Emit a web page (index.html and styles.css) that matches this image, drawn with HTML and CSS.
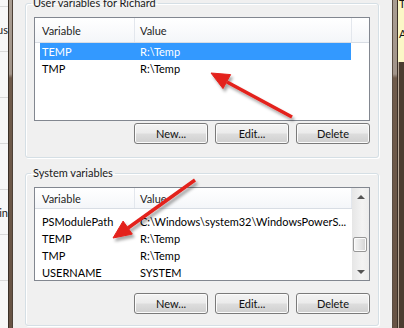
FILE: index.html
```html
<!DOCTYPE html>
<html lang="en">
<head>
    <meta charset="UTF-8" />
    <title>Environment Variables</title>
    <link rel="stylesheet" href="styles.css">
</head>

<body>
    <div class="desk">

        <div class="behind">
            <div class="behind-row"></div>
            <div class="behind-row tall"><span>Status</span></div>
            <div class="behind-row"></div>
            <div class="behind-row"></div>
            <div class="behind-row"></div>
            <div class="behind-row tall"><span>Admin</span></div>
            <div class="behind-row"></div>
        </div>

        <div class="frame"></div>

        <main class="dialog">

            <fieldset class="group group-user">
                <legend>User variables for Richard</legend>
                <div class="list list-user">
                    <div class="list-main">
                        <div class="list-head">
                            <div class="col col-name">Variable</div>
                            <div class="col col-value">Value</div>
                            <div class="col col-rest"></div>
                        </div>
                        <div class="list-body">
                            <div class="row selected">
                                <span class="cell cell-name">TEMP</span>
                                <span class="cell cell-value">R:\Temp</span>
                            </div>
                            <div class="row">
                                <span class="cell cell-name">TMP</span>
                                <span class="cell cell-value">R:\Temp</span>
                            </div>
                        </div>
                    </div>
                </div>
                <div class="buttons">
                    <button class="btn">New...</button>
                    <button class="btn">Edit...</button>
                    <button class="btn">Delete</button>
                </div>
            </fieldset>

            <fieldset class="group group-system">
                <legend>System variables</legend>
                <div class="list list-system">
                    <div class="list-main">
                        <div class="list-head">
                            <div class="col col-name">Variable</div>
                            <div class="col col-value">Value</div>
                        </div>
                        <div class="list-body">
                            <div class="row">
                                <span class="cell cell-name">PSModulePath</span>
                                <span class="cell cell-value">C:\Windows\system32\WindowsPowerS...</span>
                            </div>
                            <div class="row">
                                <span class="cell cell-name">TEMP</span>
                                <span class="cell cell-value">R:\Temp</span>
                            </div>
                            <div class="row">
                                <span class="cell cell-name">TMP</span>
                                <span class="cell cell-value">R:\Temp</span>
                            </div>
                            <div class="row">
                                <span class="cell cell-name">USERNAME</span>
                                <span class="cell cell-value">SYSTEM</span>
                            </div>
                        </div>
                    </div>
                    <div class="scrollbar">
                        <div class="scroll-btn"><span class="tri tri-up"></span></div>
                        <div class="scroll-track"><div class="scroll-thumb"></div></div>
                        <div class="scroll-btn"><span class="tri tri-down"></span></div>
                    </div>
                </div>
                <div class="buttons">
                    <button class="btn">New...</button>
                    <button class="btn">Edit...</button>
                    <button class="btn">Delete</button>
                </div>
            </fieldset>

        </main>

        <div class="frame frame-right"></div>

        <div class="note">
            <div class="note-paper"><span>T</span><span>A</span></div>
        </div>
    </div>

    <!-- the two red callout arrows drawn over the dialog -->
    <svg class="arrows" width="404" height="328" viewBox="0 0 404 328">
        <defs>
            <filter id="shade" x="-20%" y="-20%" width="140%" height="140%">
                <feDropShadow dx="2" dy="3" stdDeviation="1.6" flood-color="#000" flood-opacity="0.35" />
            </filter>
        </defs>
        <g filter="url(#shade)" fill="#e3211b" stroke="#e3211b">
            <line x1="292" y1="117" x2="227" y2="82" stroke-width="3.5" />
            <polygon points="211,73 230.6,74.6 223,88.6" stroke-width="1" />
            <line x1="195" y1="180" x2="128" y2="228" stroke-width="3.5" />
            <polygon points="113,238 123.1,221.1 132.3,234.1" stroke-width="1" />
        </g>
    </svg>
</body>

</html>
```

FILE: styles.css
```css
* {
    box-sizing: border-box;
}

html,
body {
    margin: 0;
    width: 404px;
    height: 328px;
    overflow: hidden;
    font-family: Lato, 'Open Sans', sans-serif;
    font-size: 11px;
    color: #000;
}

body {
    position: relative;
}

.desk {
    display: flex;
    height: 328px;
}

/* window behind, left edge */
.behind {
    width: 8px;
    flex: none;
    background: #f7f7f7;
    overflow: hidden;
}

.behind-row {
    height: 46px;
    border-bottom: 1px solid #d9d9d9;
    display: flex;
    align-items: center;
    justify-content: flex-end;
    white-space: nowrap;
    color: #222;
}

.behind-row:first-child {
    height: 7px;
}

.behind-row.tall {
    height: 45px;
}

.frame {
    width: 5px;
    flex: none;
    border-left: 1px solid #3b3027;
    border-right: 1px solid #4d4137;
    background: linear-gradient(#a99d92 0, #a2958a 74px, #6f5b4b 78px, #675344 100%);
}

.frame-right {
    width: 6px;
    border-left-color: #5a4d42;
    border-right-color: #3b3027;
}

.note {
    width: 6px;
    flex: none;
    background: linear-gradient(90deg, #b9a998 0, #b9a998 1px, #4b3c30 1px);
}

.note-paper {
    height: 62px;
    background: #fbf7c6;
    display: flex;
    flex-direction: column;
    padding-left: 1px;
    font-size: 11px;
    line-height: 8px;
    gap: 22px;
    overflow: hidden;
    color: #111;
}

/* dialog */
.dialog {
    width: 379px;
    flex: none;
    padding: 0 13px 0 12px;
    background: #f0f0f0;
}

.group {
    margin: 0;
    padding: 7px 8px 13px;
    min-width: 0;
    border: 1px solid #d5dfe5;
    border-radius: 3px;
    box-shadow: 1px 1px 0 #fff, inset 1px 1px 0 #fff;
}

.group legend {
    padding: 0 2px;
    margin-left: -3px;
    line-height: 14px;
    color: #1a1a1a;
}

.group-user {
    margin-top: -4px;
}

.group-system {
    margin-top: 8px;
    padding-bottom: 11px;
}

.list {
    display: flex;
    border: 1px solid #828790;
    background: #fff;
    overflow: hidden;
}

.list-user {
    height: 104px;
}

.list-system {
    height: 94px;
}

.list-main {
    flex: 1;
    min-width: 0;
}

.list-head {
    display: flex;
    height: 25px;
    border-bottom: 1px solid #d8dde4;
    background: linear-gradient(#ffffff, #f4f6f9);
}

.list-system .list-head {
    height: 21px;
}

.col {
    height: 100%;
    display: flex;
    align-items: center;
    border-right: 1px solid #e3e7ed;
    color: #1e1e1e;
}

.col-name {
    width: 100px;
    padding-left: 7px;
}

.col-value {
    width: 217px;
    padding-left: 5px;
}

.col-rest {
    flex: 1;
    border-right: none;
}

.list-system .list-body {
    padding-top: 4px;
}

.row {
    display: flex;
    width: 311px;
    height: 17px;
    margin-left: 5px;
    align-items: center;
    white-space: nowrap;
}

.row.selected {
    background: #3399ff;
    color: #fff;
}

.cell-name {
    width: 95px;
    flex: none;
    padding-left: 2px;
}

.cell-value {
    padding-left: 5px;
}

/* vertical scrollbar of the system list */
.scrollbar {
    width: 17px;
    flex: none;
    display: flex;
    flex-direction: column;
    background: linear-gradient(90deg, #e6e6e6, #f3f3f3 60%, #ececec);
}

.scroll-btn {
    height: 17px;
    display: flex;
    align-items: center;
    justify-content: center;
}

.scroll-track {
    flex: 1;
}

.scroll-thumb {
    height: 15px;
    margin: 32px 2px 0 1px;
    border: 1px solid #979797;
    border-radius: 2px;
    background: linear-gradient(90deg, #f6f6f6, #e6e6e6 50%, #d2d2d2);
    box-shadow: inset 0 0 0 1px #fbfbfb;
}

.tri {
    width: 0;
    height: 0;
    border-left: 4px solid transparent;
    border-right: 4px solid transparent;
}

.tri-up {
    border-bottom: 4px solid #555;
}

.tri-down {
    border-top: 4px solid #555;
}

.buttons {
    display: flex;
    justify-content: flex-end;
    gap: 7px;
    margin-top: 2px;
}

.group-system .buttons {
    margin-top: 12px;
}

.btn {
    width: 74px;
    height: 21px;
    padding: 0;
    border: 1px solid #7a7a7a;
    border-radius: 3px;
    background: linear-gradient(#f3f3f3 0, #ebebeb 48%, #dddddd 52%, #cfcfcf 100%);
    box-shadow: inset 0 0 0 1px #fbfbfb;
    font: inherit;
    color: #111;
}

.arrows {
    position: absolute;
    left: 0;
    top: 0;
    pointer-events: none;
}
```
